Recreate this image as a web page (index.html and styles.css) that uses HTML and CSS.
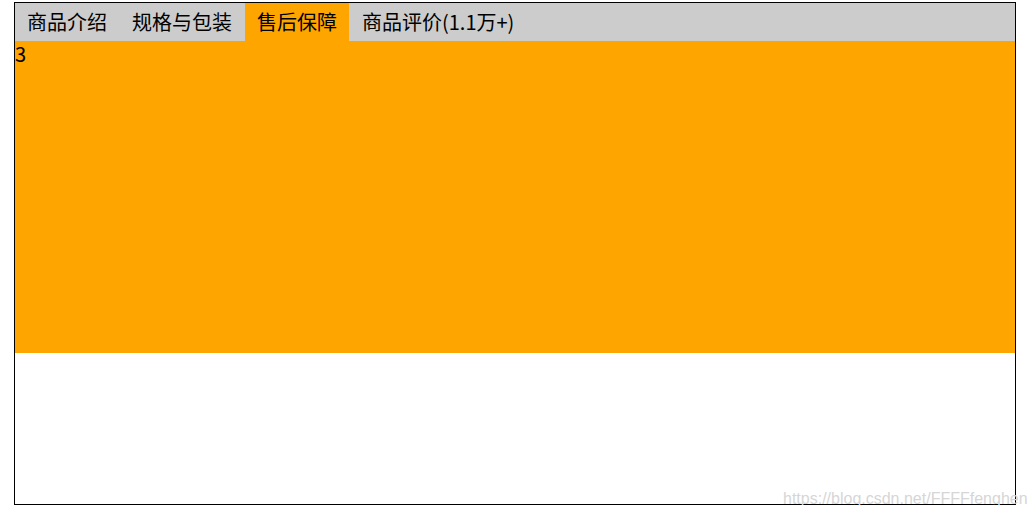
FILE: index.html
```html
<!DOCTYPE html>
<html lang="zh-CN">
<head>
<meta charset="utf-8">
<title>Tabs</title>
<link rel="stylesheet" href="styles.css">
</head>
<body>
<div class="box">
  <div class="tabs">
    <div class="tab">商品介绍</div>
    <div class="tab">规格与包装</div>
    <div class="tab active">售后保障</div>
    <div class="tab">商品评价(1.1万+)</div>
  </div>
  <div class="panel">3</div>
</div>
<div class="watermark">https://blog.csdn.net/FFFFfenghen</div>
</body>
</html>
```
FILE: styles.css
```css
html, body {
  margin: 0;
  padding: 0;
  background: #fff;
}
body {
  position: relative;
  font-family: "Noto Sans CJK SC", "Noto Sans", sans-serif;
  color: #000;
}
.box {
  margin: 2px 0 0 14px;
  width: 1000px;
  height: 501px;
  border: 1px solid #000;
}
.tabs {
  display: flex;
  gap: 1px;
  height: 38px;
  background: #cccccc;
}
.tab {
  padding: 0 12px;
  font-size: 20px;
  line-height: 38px;
  white-space: nowrap;
}
.tab.active {
  background: #ffa500;
}
.panel {
  height: 312px;
  background: #ffa500;
  font-size: 20px;
  line-height: 26px;
}
.watermark {
  position: absolute;
  left: 783px;
  top: 491px;
  font-family: "Liberation Sans", Arial, sans-serif;
  font-size: 16px;
  line-height: 16px;
  color: #d6d6d6;
  white-space: nowrap;
}
```
